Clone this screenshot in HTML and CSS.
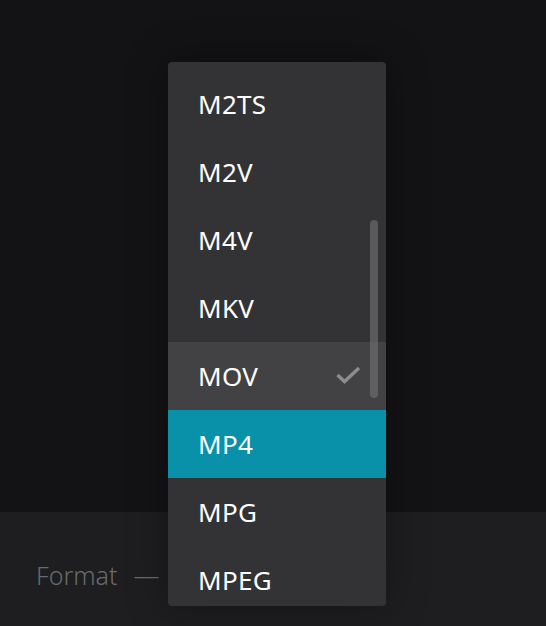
FILE: index.html
```html
<!DOCTYPE html>
<html>
<head>
<meta charset="utf-8">
<link rel="stylesheet" href="styles.css">
</head>
<body>
<div class="page">
  <div class="stage"></div>
  <div class="bar">
    <span class="label">Format</span>
    <span class="dash">—</span>
  </div>
  <div class="menu">
    <ul class="list">
      <li class="item">M2TS</li>
      <li class="item">M2V</li>
      <li class="item">M4V</li>
      <li class="item">MKV</li>
      <li class="item hover">MOV
        <svg class="check" width="26" height="20" viewBox="0 0 26 20"><path d="M1.5 10 L8.5 16.5 L23 3" fill="none" stroke="#8c8c8e" stroke-width="3.5"/></svg>
      </li>
      <li class="item active">MP4</li>
      <li class="item">MPG</li>
      <li class="item">MPEG</li>
    </ul>
    <div class="thumb"></div>
  </div>
</div>
</body>
</html>
```
FILE: styles.css
```css
html, body {
  margin: 0;
  padding: 0;
  background: #131315;
}
.page {
  position: relative;
  width: 546px;
  height: 626px;
  overflow: hidden;
  display: flex;
  flex-direction: column;
  font-family: "Noto Sans", "Open Sans", sans-serif;
}
.stage {
  height: 512px;
  background: #131315;
}
.bar {
  flex: 1;
  background: #1e1e20;
  display: flex;
  align-items: center;
  padding: 12px 0 0 36px;
  gap: 16px;
  color: #6a6a6c;
  font-size: 25px;
  font-weight: 300;
}
.dash {
  font-size: 26px;
}
.menu {
  position: absolute;
  left: 168px;
  top: 62px;
  width: 218px;
  height: 544px;
  background: #333335;
  border-radius: 4px;
  overflow: hidden;
  box-shadow: 0 0 40px rgba(0, 0, 0, 0.35);
}
.list {
  list-style: none;
  margin: 0;
  padding: 8px 0 0 0;
}
.item {
  position: relative;
  height: 68px;
  display: flex;
  align-items: center;
  padding-left: 30px;
  color: #ffffff;
  font-size: 26px;
  font-weight: 400;
  letter-spacing: 0.3px;
}
.item.hover {
  background: #424244;
}
.item.active {
  background: #0891a8;
}
.check {
  position: absolute;
  left: 168px;
  top: 23px;
}
.thumb {
  position: absolute;
  left: 202px;
  top: 158px;
  width: 8px;
  height: 178px;
  border-radius: 4px;
  background: rgba(120, 120, 122, 0.55);
}
```
